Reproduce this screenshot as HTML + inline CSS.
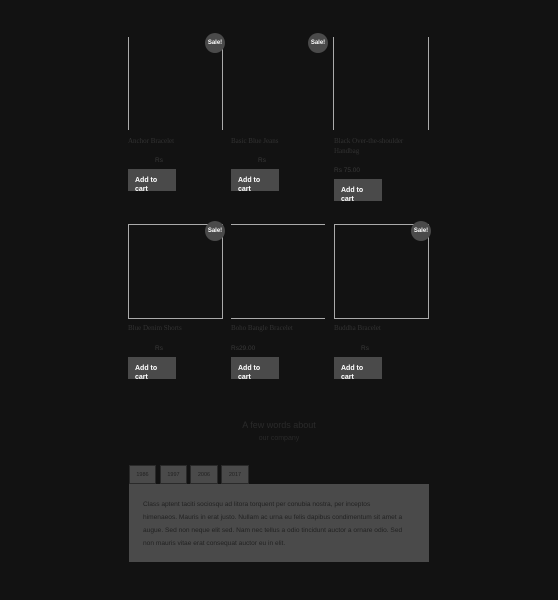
<!DOCTYPE html>
<html><head><style>
body{margin:0;background:#121212;width:558px;height:600px;position:relative;overflow:hidden;font-family:"Liberation Sans",sans-serif}
.a{position:absolute}
.sale{position:absolute;width:20px;height:20px;border-radius:50%;background:#4a4a4a;color:#fff;font-size:6px;font-weight:bold;text-align:center;line-height:20px}
.t{position:absolute;font-family:"Liberation Serif",serif;font-size:7px;color:#333;line-height:10px;width:80px}
.p{position:absolute;font-size:6.5px;color:#3a3a3a}
.b{position:absolute;width:48px;height:22px;background:#4a4a4a;color:#fff;font-size:7px;font-weight:bold;box-sizing:border-box;padding:7px 0 0 7px;line-height:9px;overflow:hidden;white-space:nowrap}
.tab{position:absolute;top:465px;height:19px;background:#4a4a4a;border:1px solid #2a2a2a;box-sizing:border-box;font-size:5.5px;color:#222;text-align:center;line-height:18px}
</style></head><body>
<div class="a" style="left:128px;top:37px;width:1px;height:93px;background:#aaa"></div>
<div class="a" style="left:222px;top:37px;width:1px;height:93px;background:#aaa"></div>
<div class="a" style="left:333px;top:37px;width:1px;height:93px;background:#aaa"></div>
<div class="a" style="left:428px;top:37px;width:1px;height:93px;background:#aaa"></div>
<div class="sale" style="left:205px;top:33px">Sale!</div>
<div class="sale" style="left:308px;top:33px">Sale!</div>
<div class="t" style="left:128px;top:136px">Anchor Bracelet</div>
<div class="t" style="left:231px;top:136px">Basic Blue Jeans</div>
<div class="t" style="left:334px;top:136px;width:75px">Black Over-the-shoulder Handbag</div>
<div class="p" style="left:155px;top:157px">Rs</div>
<div class="p" style="left:258px;top:157px">Rs</div>
<div class="p" style="left:334px;top:167px">Rs 75.00</div>
<div class="b" style="left:128px;top:169px">Add to<br>cart</div>
<div class="b" style="left:231px;top:169px">Add to<br>cart</div>
<div class="b" style="left:334px;top:179px">Add to<br>cart</div>

<div class="a" style="left:128px;top:224px;width:93px;height:93px;border:1px solid #aaa"></div>
<div class="a" style="left:231px;top:224px;width:94px;height:93px;border-top:1px solid #aaa;border-bottom:1px solid #aaa"></div>
<div class="a" style="left:334px;top:224px;width:93px;height:93px;border:1px solid #aaa"></div>
<div class="sale" style="left:205px;top:221px">Sale!</div>
<div class="sale" style="left:411px;top:221px">Sale!</div>
<div class="t" style="left:128px;top:323px">Blue Denim Shorts</div>
<div class="t" style="left:231px;top:323px">Boho Bangle Bracelet</div>
<div class="t" style="left:334px;top:323px">Buddha Bracelet</div>
<div class="p" style="left:155px;top:345px">Rs</div>
<div class="p" style="left:231px;top:345px">Rs29.00</div>
<div class="p" style="left:361px;top:345px">Rs</div>
<div class="b" style="left:128px;top:357px">Add to<br>cart</div>
<div class="b" style="left:231px;top:357px">Add to<br>cart</div>
<div class="b" style="left:334px;top:357px">Add to<br>cart</div>

<div class="a" style="left:0;width:558px;top:419px;text-align:center;font-size:9px;color:#2a2a2a;line-height:12px">A few words about<br><span style="font-size:7px">our company</span></div>
<div class="tab" style="left:129px;width:27px">1986</div>
<div class="tab" style="left:160px;width:27px">1997</div>
<div class="tab" style="left:190px;width:28px">2006</div>
<div class="tab" style="left:221px;width:28px">2017</div>
<div class="a" style="left:129px;top:484px;width:300px;height:78px;background:#4a4a4a;box-sizing:border-box;padding:14px 0 0 14px;font-size:6.6px;color:#222;line-height:13px;white-space:nowrap">Class aptent taciti sociosqu ad litora torquent per conubia nostra, per inceptos<br>himenaeos. Mauris in erat justo. Nullam ac urna eu felis dapibus condimentum sit amet a<br>augue. Sed non neque elit sed. Nam nec tellus a odio tincidunt auctor a ornare odio. Sed<br>non mauris vitae erat consequat auctor eu in elit.</div>
</body></html>
